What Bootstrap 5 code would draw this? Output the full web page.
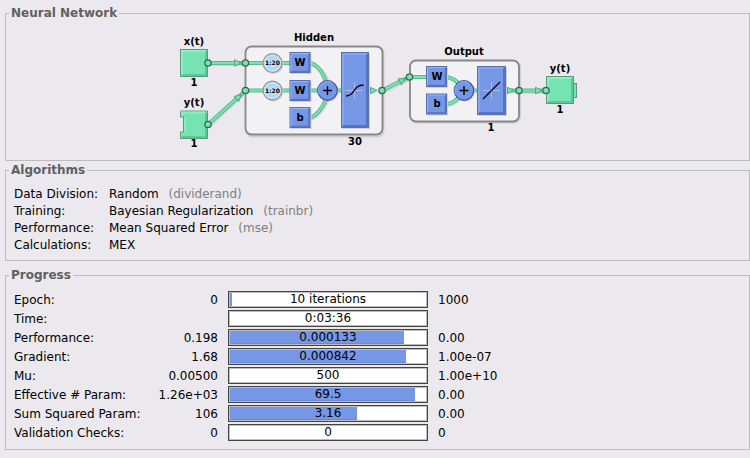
<!DOCTYPE html>
<html lang="en">
<head>
<meta charset="utf-8">
<meta name="viewport" content="width=device-width, initial-scale=1">
<title>Neural Network Training</title>
<link href="https://cdn.jsdelivr.net/npm/bootstrap@5.3.0/dist/css/bootstrap.min.css" rel="stylesheet">
<style>
  body { background: #ebe9ee; color: #000; font: 12px/17px "DejaVu Sans", sans-serif; }
  .window-body { padding: 5px 0 8px 5px; }
  .panel { border: 1px solid #bcbcbe; padding: 0 3px 7px 3px; }
  .panel legend { font-size: 12px; line-height: 16px; font-weight: 700; color: #606060; padding: 0 2px; }
  .panel-net { padding-bottom: 3px; margin-bottom: 1px; }
  .panel-alg { margin-bottom: 6px; padding-bottom: 6px; }
  .panel-content { padding: 7px 0 0 5px; }
  .panel-alg .panel-content { padding-top: 8px; }
  .alg-grid { display: grid; grid-template-columns: 95px 1fr; }
  .fn-name { color: #808080; margin-left: 6px; }
  .stats th, .stats td { height: 19px; padding: 2px 0 0; font-weight: 400; white-space: nowrap; }
  .stats td.bar-cell { padding: 0; }
  .col-label { width: 137px; }
  .col-start { width: 67px; }
  .col-bar { width: 220px; }
  .meter { height: 17px; margin: 0 10px; border: 1px solid #444; border-radius: 0; background: #fff; box-shadow: inset 0 0 0 1px #bdbdbd; padding: 1px; font-size: 12px; }
  .meter .progress-bar { background: #7696e6; border-bottom: 1px solid #6a88d8; }
  .meter-text { line-height: 13px; }
  .net text { font: 700 10px "DejaVu Sans", sans-serif; text-anchor: middle; fill: #000; }
  .net .delay-text { font-size: 6px; }
  .net .wire { fill: none; stroke: #5fb890; stroke-width: 4; }
  .net .wire-in { fill: none; stroke: #76e3b2; stroke-width: 2; }
  .net .shade { fill: none; stroke: #d4d3d8; stroke-width: 4; }
</style>
<script src="https://cdn.jsdelivr.net/npm/bootstrap@5.3.0/dist/js/bootstrap.bundle.min.js"></script>
</head>
<body>
<main class="window-body">

<fieldset class="panel panel-net">
  <legend class="float-none w-auto mb-0">Neural Network</legend>
  <svg class="net d-block mx-auto" width="401" height="136" viewBox="177 21 401 136" role="img" aria-label="Network diagram">
    <defs>
      <radialGradient id="ball"><stop offset="0" stop-color="#d6f0ff"/><stop offset=".6" stop-color="#a9d6f8"/><stop offset="1" stop-color="#d9eaf6"/></radialGradient>
      <g id="port"><circle r="3.2" fill="#76e3b2" stroke="#326b51" stroke-width="1.2"/></g>
      <g id="head"><path d="M-3.5-3.2L3-0L-3.5 3.2z" fill="#76e3b2" stroke="#55a582"/></g>
      <g id="block">
        <rect x="1" y="1" width="21" height="21" fill="#d0cfd5"/>
        <rect x=".5" y=".5" width="20" height="20" fill="#7696e6" stroke="#5a6fae"/>
        <path d="M1.5 19.5V1.5H19.5" fill="none" stroke="#98b1f2"/>
        <path d="M2 19.5H19.5V2" fill="none" stroke="#5573c6" stroke-width="1.5"/>
      </g>
      <g id="sum">
        <circle cx="1" cy="1" r="10" fill="#cccbd2"/>
        <circle r="9.8" fill="#7696e6" stroke="#3c5298" stroke-width="1.2"/>
        <path d="M-8 4A9 9 0 0 1 5-7.5" fill="none" stroke="#96aff2"/>
        <path d="M-4.5 0H4.5M0-4.5V4.5" stroke="#000" stroke-width="1.4"/>
      </g>
      <g id="delay">
        <circle cx="1" cy="1" r="10" fill="#d0cfd5"/>
        <circle r="9.3" fill="url(#ball)" stroke="#8d9298" stroke-width="1.4"/>
        <circle r="8.2" fill="none" stroke="#d8dde2" stroke-width="1.2"/>
        <text class="delay-text" y="2">1:20</text>
      </g>
      <g id="term">
        <rect x=".5" y=".5" width="27" height="27" fill="#76e3b2" stroke="#5a9a7c"/>
        <path d="M2 26V2H26" fill="none" stroke="#8fecc3" stroke-width="2"/>
        <path d="M2 26H26V2" fill="none" stroke="#5bc896" stroke-width="2"/>
      </g>
    </defs>

    <rect x="246.500" y="47.500" width="137" height="89" rx="6" fill="none" stroke="#cfced3" stroke-width="2"/>
    <rect x="245.500" y="46.500" width="137" height="88" rx="6" fill="#f2f2f5" stroke="#878787" stroke-width="1.800"/>
    <rect x="411" y="61.500" width="109" height="61" rx="6" fill="none" stroke="#cfced3" stroke-width="2"/>
    <rect x="410" y="60.500" width="109" height="61" rx="6" fill="#f2f2f5" stroke="#878787" stroke-width="1.800"/>

    <path class="shade" d="M209 64H245M209 126L244 93M383 92L409 79M520 92H546M311 64Q322 68 328 81M311 119Q322 114 328 99M448 78Q455 79 460 85M448 105Q455 104 460 98"/>
    <path class="wire" d="M208 63H290M208 124.500L244 92M245 90.500H345M310 63Q320 65 326 82M310 118Q320 114 326 99M368 90.500H374M382 90.500L409 77H428M447 77Q454 78 459 84M447 104Q454 103 459 97M470 90.500H480M505 90.500H546"/>
    <path class="wire-in" d="M208 63H290M208 124.500L244 92M245 90.500H345M310 63Q320 65 326 82M310 118Q320 114 326 99M368 90.500H374M382 90.500L409 77H428M447 77Q454 78 459 84M447 104Q454 103 459 97M470 90.500H480M505 90.500H546"/>

    <use href="#head" x="238" y="63"/><use href="#head" transform="translate(239 96.500) rotate(-43)"/>
    <use href="#head" x="374" y="90.500"/><use href="#head" transform="translate(403 80) rotate(-27)"/>
    <use href="#head" x="511" y="90.500"/><use href="#head" x="539" y="90.500"/>

    <use href="#term" x="180" y="49"/>
    <path d="M180.500 111H207.500V138.500H180.500V132H183.500V117H180.500z" fill="#76e3b2" stroke="#5a9a7c"/>
    <path d="M182 115.500V112.500H206M185 131V118" fill="none" stroke="#8fecc3" stroke-width="2"/>
    <path d="M182 137H206V113" fill="none" stroke="#5bc896" stroke-width="2"/>
    <rect x="572.500" y="83.500" width="4" height="14" fill="#76e3b2" stroke="#5a9a7c"/>
    <use href="#term" x="546" y="76"/>

    <use href="#port" x="208" y="63"/><use href="#port" x="245.500" y="63"/>
    <use href="#port" x="208" y="124.500"/><use href="#port" x="245.500" y="90.500"/>
    <use href="#port" x="382" y="90.500"/><use href="#port" x="409.500" y="77"/>
    <use href="#port" x="519" y="90.500"/><use href="#port" x="546" y="90.500"/>

    <use href="#delay" x="272.500" y="63"/><use href="#delay" x="272.500" y="90.500"/>
    <use href="#block" x="289.500" y="52"/><use href="#block" x="289.500" y="80"/><use href="#block" x="289.500" y="107"/>
    <use href="#block" x="426" y="66"/><use href="#block" x="426" y="93.500"/>
    <use href="#sum" x="327.500" y="90.500"/><use href="#sum" x="464" y="90.500"/>

    <rect x="342" y="54" width="28" height="75" fill="#d0cfd5"/>
    <rect x="341.500" y="52.500" width="27" height="75" fill="#7696e6" stroke="#5a6fae"/>
    <path d="M343 126V54H367" fill="none" stroke="#98b1f2"/>
    <path d="M343 126H367V54" fill="none" stroke="#5573c6" stroke-width="2"/>
    <path d="M346 90.500H363M354.500 82V99" stroke="#a9bdf3"/>
    <path d="M346 96C355 96 353 85 363.500 85" fill="none" stroke="#000" stroke-width="1.300"/>

    <rect x="479" y="68" width="28" height="48" fill="#d0cfd5"/>
    <rect x="477.500" y="66.500" width="28" height="48" fill="#7696e6" stroke="#5a6fae"/>
    <path d="M479 113V68H504" fill="none" stroke="#98b1f2"/>
    <path d="M479 113H504V68" fill="none" stroke="#5573c6" stroke-width="2"/>
    <path d="M483 90.500H500M491.500 82V99" stroke="#a9bdf3"/>
    <path d="M483 99L500 82" stroke="#000" stroke-width="1.300"/>

    <text x="194" y="45">x(t)</text><text x="194" y="86">1</text>
    <text x="194" y="106">y(t)</text><text x="194" y="147">1</text>
    <text x="314" y="41">Hidden</text><text x="355" y="145">30</text>
    <text x="464" y="55">Output</text><text x="491" y="131">1</text>
    <text x="560" y="72">y(t)</text><text x="560" y="113">1</text>
    <text x="300" y="66">W</text><text x="300" y="94">W</text><text x="300" y="121">b</text>
    <text x="437" y="80">W</text><text x="437" y="107">b</text>
  </svg>
</fieldset>

<fieldset class="panel panel-alg">
  <legend class="float-none w-auto mb-0">Algorithms</legend>
  <div class="panel-content">
    <div class="alg-grid"><span>Data Division:</span><span>Random <span class="fn-name">(dividerand)</span></span></div>
    <div class="alg-grid"><span>Training:</span><span>Bayesian Regularization <span class="fn-name">(trainbr)</span></span></div>
    <div class="alg-grid"><span>Performance:</span><span>Mean Squared Error <span class="fn-name">(mse)</span></span></div>
    <div class="alg-grid"><span>Calculations:</span><span>MEX</span></div>
  </div>
</fieldset>

<fieldset class="panel">
  <legend class="float-none w-auto mb-0">Progress</legend>
  <div class="panel-content">
    <table class="stats">
      <colgroup><col class="col-label"><col class="col-start"><col class="col-bar"><col></colgroup>
      <tbody>
        <tr><th scope="row">Epoch:</th><td class="text-end">0</td><td class="bar-cell"><div class="progress meter position-relative"><div class="progress-bar" style="width:1%"></div><span class="meter-text position-absolute start-0 end-0 text-center">10 iterations</span></div></td><td>1000</td></tr>
        <tr><th scope="row">Time:</th><td></td><td class="bar-cell"><div class="progress meter position-relative"><span class="meter-text position-absolute start-0 end-0 text-center">0:03:36</span></div></td><td></td></tr>
        <tr><th scope="row">Performance:</th><td class="text-end">0.198</td><td class="bar-cell"><div class="progress meter position-relative"><div class="progress-bar" style="width:89%"></div><span class="meter-text position-absolute start-0 end-0 text-center">0.000133</span></div></td><td>0.00</td></tr>
        <tr><th scope="row">Gradient:</th><td class="text-end">1.68</td><td class="bar-cell"><div class="progress meter position-relative"><div class="progress-bar" style="width:90%"></div><span class="meter-text position-absolute start-0 end-0 text-center">0.000842</span></div></td><td>1.00e-07</td></tr>
        <tr><th scope="row">Mu:</th><td class="text-end">0.00500</td><td class="bar-cell"><div class="progress meter position-relative"><span class="meter-text position-absolute start-0 end-0 text-center">500</span></div></td><td>1.00e+10</td></tr>
        <tr><th scope="row">Effective # Param:</th><td class="text-end">1.26e+03</td><td class="bar-cell"><div class="progress meter position-relative"><div class="progress-bar" style="width:94.500%"></div><span class="meter-text position-absolute start-0 end-0 text-center">69.5</span></div></td><td>0.00</td></tr>
        <tr><th scope="row">Sum Squared Param:</th><td class="text-end">106</td><td class="bar-cell"><div class="progress meter position-relative"><div class="progress-bar" style="width:65%"></div><span class="meter-text position-absolute start-0 end-0 text-center">3.16</span></div></td><td>0.00</td></tr>
        <tr><th scope="row">Validation Checks:</th><td class="text-end">0</td><td class="bar-cell"><div class="progress meter position-relative"><span class="meter-text position-absolute start-0 end-0 text-center">0</span></div></td><td>0</td></tr>
      </tbody>
    </table>
  </div>
</fieldset>

</main>
</body>
</html>
